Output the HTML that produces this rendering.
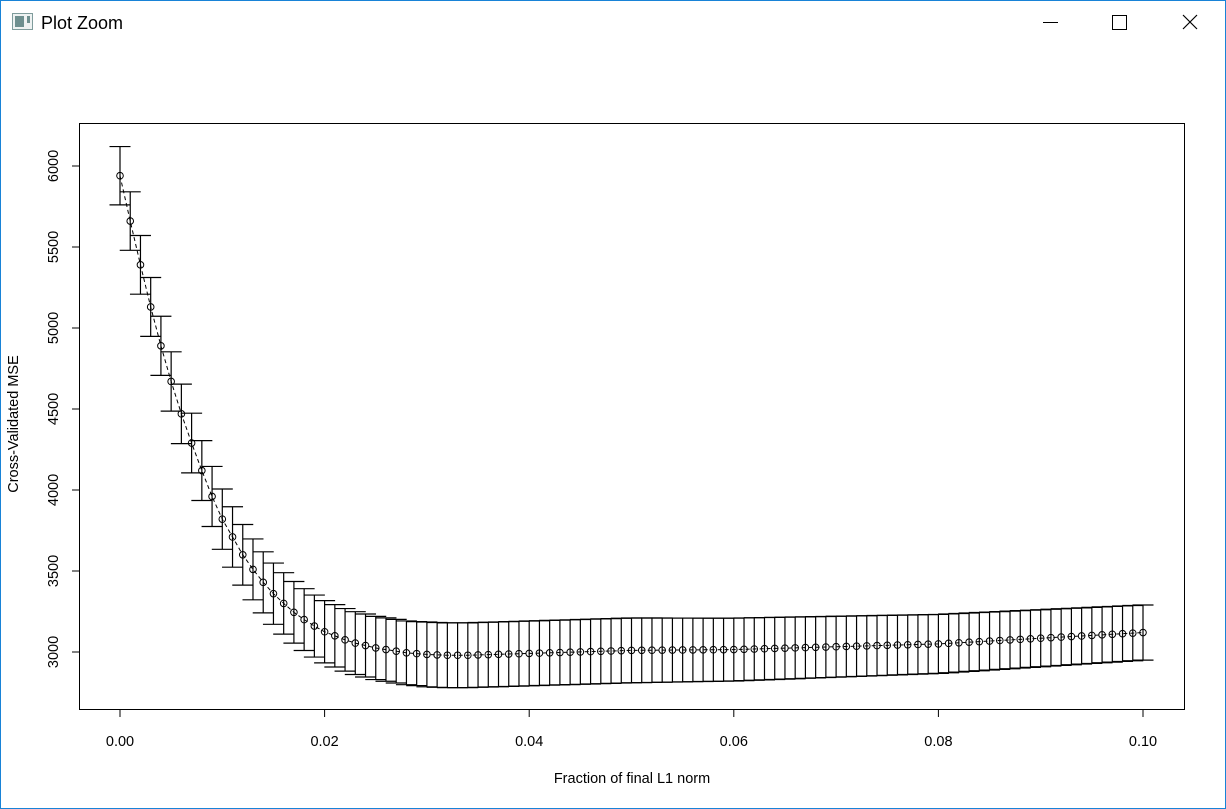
<!DOCTYPE html>
<html><head><meta charset="utf-8"><style>
html,body{margin:0;padding:0;background:#fff;width:1226px;height:809px;overflow:hidden;font-family:"Liberation Sans",Arial,sans-serif}
#win{position:absolute;left:0;top:0;width:1224px;height:807px;border:1px solid #1883d7;background:#fff}
</style></head><body>
<div id="win"></div>
<svg id="s" width="1226" height="809" style="position:absolute;left:0;top:0" xmlns="http://www.w3.org/2000/svg">
<rect x="12.5" y="13.5" width="20" height="16" fill="#eef2f2" stroke="#7f9c9c"/>
<rect x="15" y="16" width="9" height="11" fill="#6e8f8f"/>
<rect x="27" y="16" width="3" height="7" fill="#6e8f8f"/>
<text x="41" y="29" font-size="18" font-family="Liberation Sans,sans-serif">Plot Zoom</text>
<line x1="1043" y1="22.5" x2="1058" y2="22.5" stroke="#000"/>
<rect x="1112.5" y="15.5" width="14" height="14" fill="none" stroke="#000"/>
<path d="M1183 15 L1197 29 M1197 15 L1183 29" stroke="#000" stroke-width="1.2"/>
<rect x="79.5" y="123.5" width="1105" height="586" fill="none" stroke="#000"/>
<g id="g"></g>
<text transform="translate(18,424) rotate(-90)" font-size="14.5" text-anchor="middle">Cross-Validated MSE</text>
<text x="632" y="783" font-size="14.5" text-anchor="middle">Fraction of final L1 norm</text>
</svg>
<script>
var g=document.getElementById('g'),h='';
function X(v){return 120+v*10230}
function Y(v){return 652-(v-3000)*0.162}
var m=[5940,5660,5390,5130,4890,4670,4470,4290,4120,3960,3820,3710,3600,3510,3430,3360,3300,3245,3200,3160,3125,3100,3075,3055,3040,3025,3015,3005,2995,2990,2985,2982,2980,2980,2980];
for(var i=35;i<=100;i++){var t=i/1000,v;
 if(t<=0.05)v=2980+(t-0.034)/0.016*30;
 else if(t<=0.06)v=3010+(t-0.05)*500;
 else if(t<=0.08)v=3015+(t-0.06)/0.02*35;
 else v=3050+(t-0.08)/0.02*70;
 m.push(v);}
var pts=[];
for(var i=0;i<=100;i++){var x=X(i/1000),y=Y(m[i]);
 var se=i<30?180+i*0.6:(i<50?200:200-(i-50)*0.6);
 var yu=Y(m[i]+se),yl=Y(m[i]-se);
 h+='<line x1="'+x+'" y1="'+yu+'" x2="'+x+'" y2="'+yl+'" stroke="#000" stroke-width="1.2"/>';
 h+='<line x1="'+(x-10.5)+'" y1="'+yu+'" x2="'+(x+10.5)+'" y2="'+yu+'" stroke="#000" stroke-width="1.2"/>';
 h+='<line x1="'+(x-10.5)+'" y1="'+yl+'" x2="'+(x+10.5)+'" y2="'+yl+'" stroke="#000" stroke-width="1.2"/>';
 h+='<circle cx="'+x+'" cy="'+y+'" r="3.3" fill="none" stroke="#000"/>';
 pts.push(x+','+y);}
h='<polyline points="'+pts.join(' ')+'" fill="none" stroke="#000" stroke-dasharray="4,3"/>'+h;
for(var k=0;k<=5;k++){var x=X(k*0.02);
 h+='<line x1="'+x+'" y1="710" x2="'+x+'" y2="717" stroke="#000"/>';
 h+='<text x="'+x+'" y="746" font-size="14.5" text-anchor="middle">'+(k*0.02).toFixed(2)+'</text>';}
for(var v=3000;v<=6000;v+=500){var y=Y(v);
 h+='<line x1="72" y1="'+y+'" x2="79" y2="'+y+'" stroke="#000"/>';
 h+='<text transform="translate(58,'+y+') rotate(-90)" font-size="14.5" text-anchor="middle">'+v+'</text>';}
g.innerHTML=h;
</script>
</body></html>
